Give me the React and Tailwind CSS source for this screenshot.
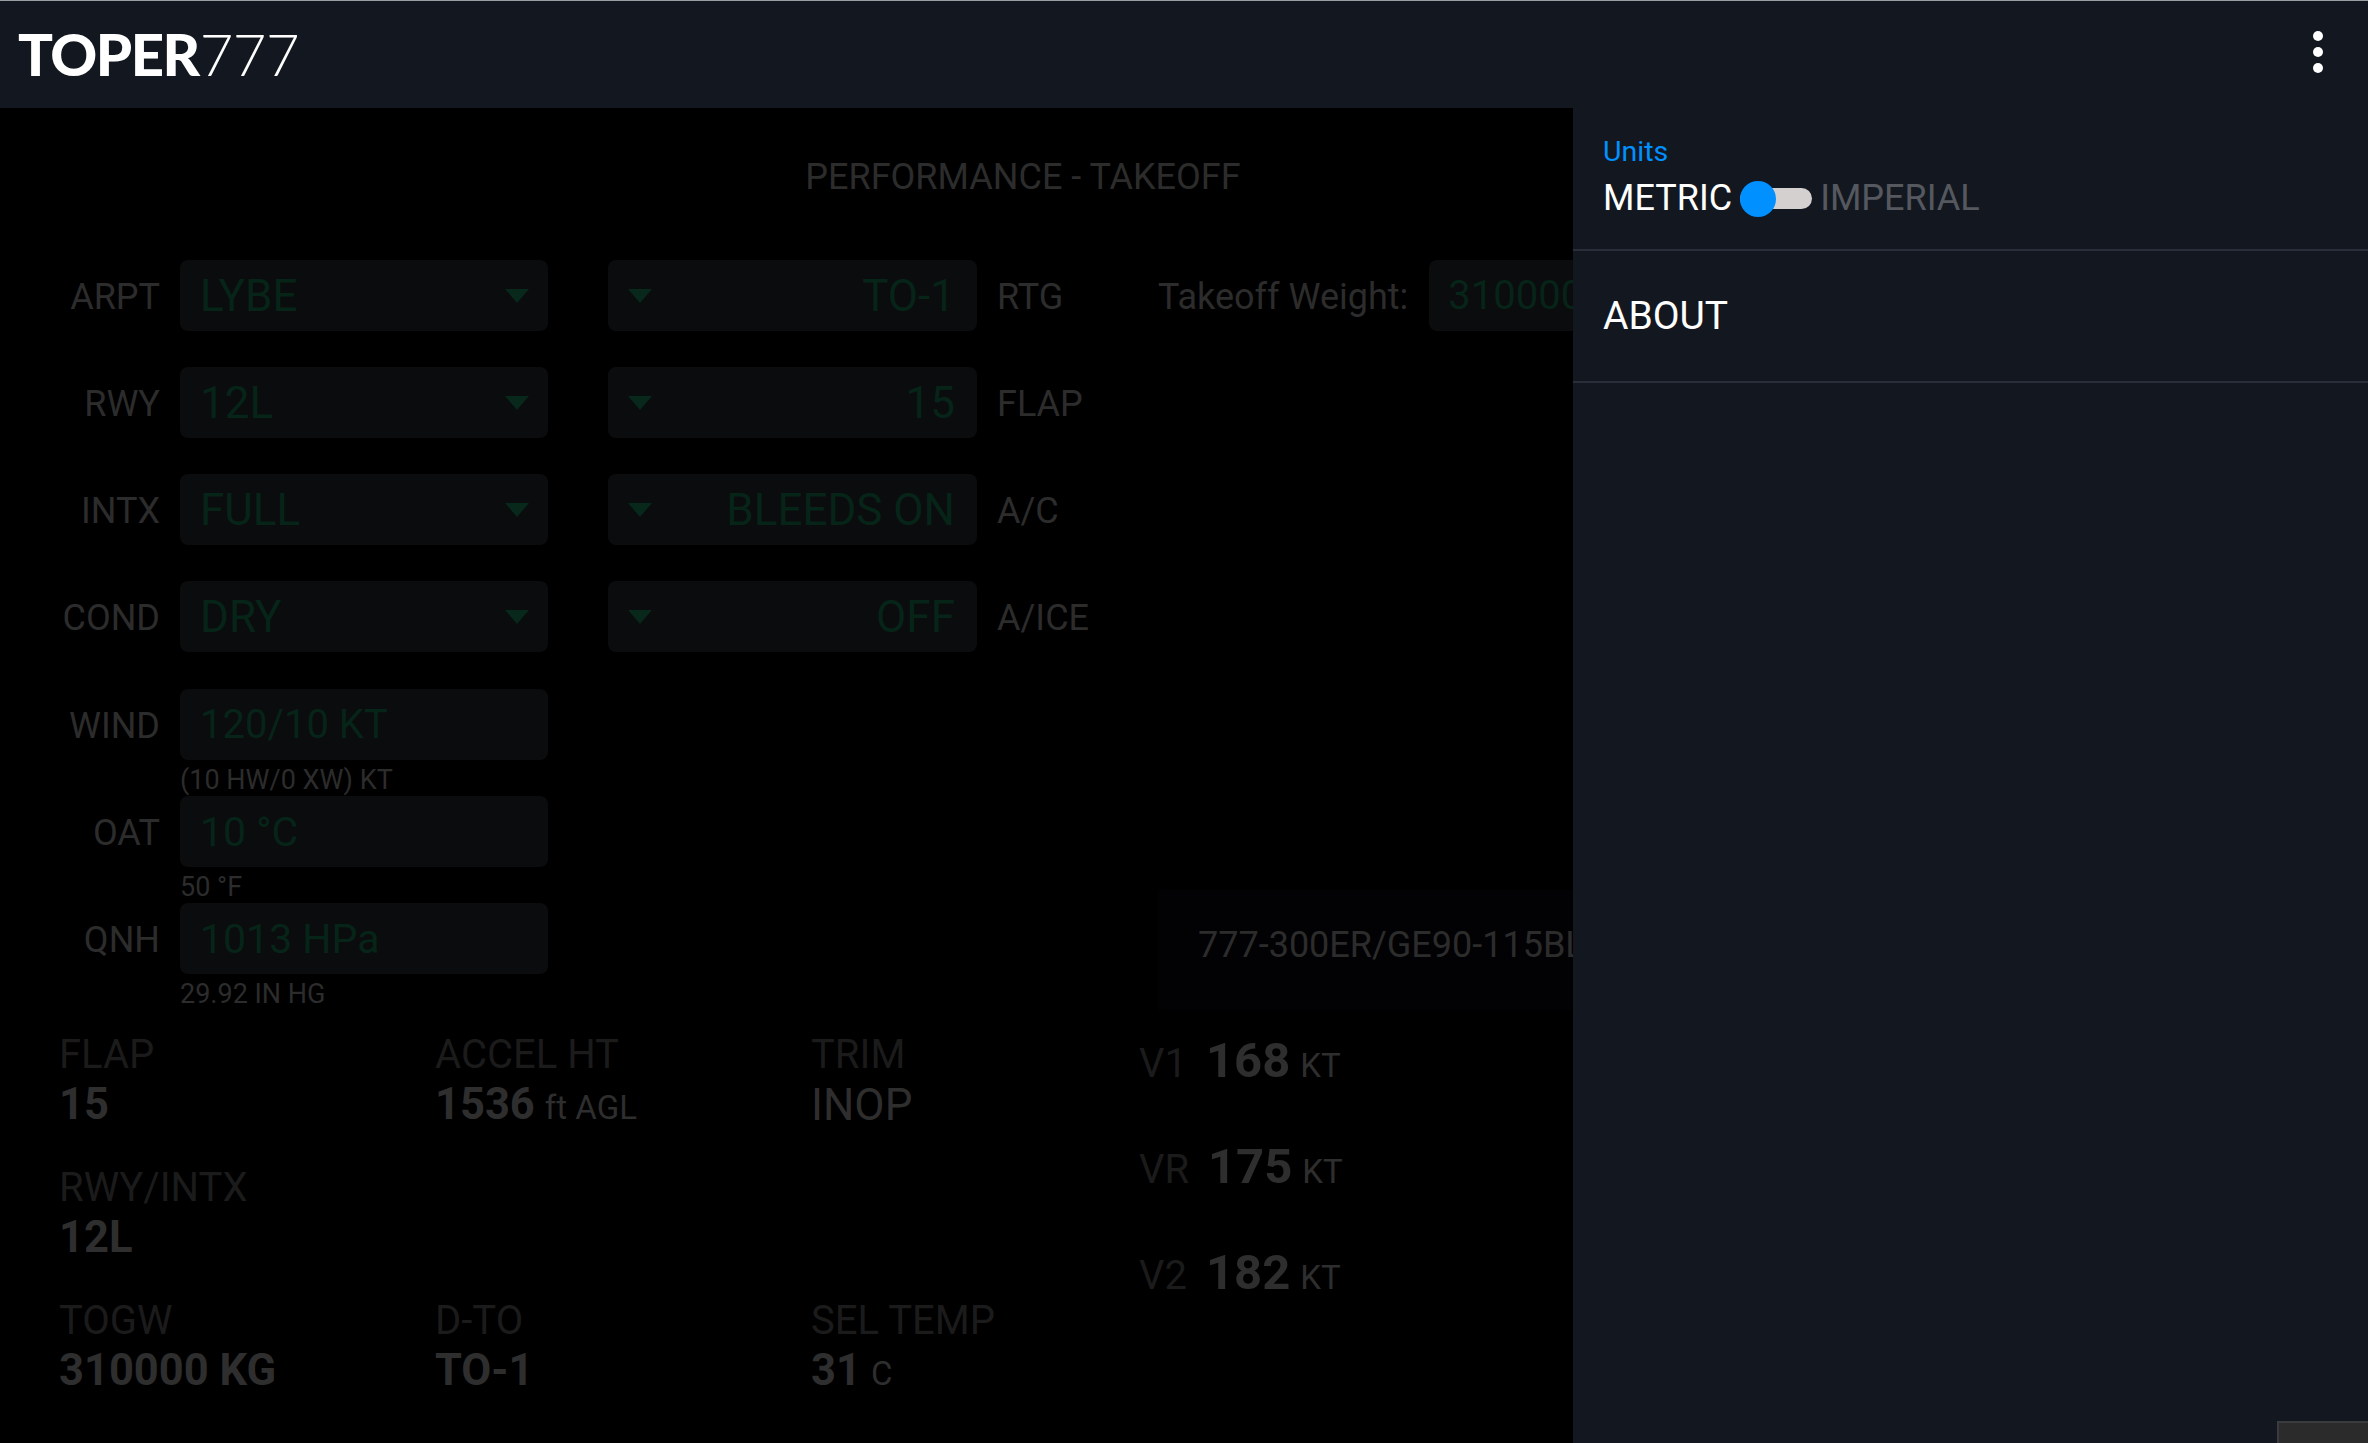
import React from "react";

function Arrow({ className }) {
  return (
    <svg width="24" height="14" viewBox="0 0 24 14" className={className}>
      <polygon points="0,0 24,0 12,14" fill="#07281b" />
    </svg>
  );
}

function Label({ children, className = "" }) {
  return <span className={"text-[36px] leading-[42px] text-[#2c2c2c] " + className}>{children}</span>;
}

function Field({ value, select, right, size = "text-[44px]" }) {
  return (
    <div
      className={
        "h-[71px] shrink-0 rounded-[8px] bg-[#0b0c0e] flex items-center leading-[52px] text-[#062418] " +
        size +
        " " +
        (right ? "w-[369px] justify-between pl-[20px] pr-[22px]" : "w-[368px] justify-between pl-[20px] pr-[19px]")
      }
    >
      {right && <Arrow />}
      <span>{value}</span>
      {select && !right && <Arrow />}
    </div>
  );
}

function LeftRow({ label, value, select, sub, size, className = "" }) {
  return (
    <div className={"h-[107px] flex items-start " + className}>
      <div className="w-[160px] h-[71px] pt-[2px] flex items-center justify-end shrink-0">
        <Label>{label}</Label>
      </div>
      <div className="ml-[20px]">
        <Field value={value} select={select} size={size} />
        {sub && <div className="mt-[2px] text-[27px] leading-[36px] text-[#2c2c2c]">{sub}</div>}
      </div>
    </div>
  );
}

function MidRow({ label, value }) {
  return (
    <div className="h-[107px] flex items-start">
      <Field value={value} select right />
      <div className="ml-[20px] h-[71px] pt-[2px] flex items-center">
        <Label>{label}</Label>
      </div>
    </div>
  );
}

function Stat({ label, value, unit }) {
  return (
    <div className="h-[133px]">
      <div className="text-[40px] leading-[47px] text-[#1b1b1b]">{label}</div>
      {value && (
        <div className="text-[43.5px] leading-[54px] font-bold text-[#2e2e2e]">
          {value}
          {unit && <span className="ml-[10px] text-[33px] font-normal">{unit}</span>}
        </div>
      )}
    </div>
  );
}

function Speed({ label, value, className = "" }) {
  return (
    <div className="h-[106px] flex items-baseline">
      <span className="w-[67px] text-[40px] leading-[60px] text-[#1b1b1b]">{label}</span>
      <span className={"text-[49px] leading-[60px] font-bold text-[#2e2e2e] " + className}>{value}</span>
      <span className="ml-[10px] text-[33px] text-[#2e2e2e]">KT</span>
    </div>
  );
}

export default function App() {
  return (
    <div className="relative h-[1443px] w-full overflow-hidden bg-black font-['Roboto',sans-serif]">
      <header className="h-[108px] border-t border-t-[#9a9da2] bg-[#131820] flex items-center justify-between pl-[18px] pr-[45px]">
        <div className="flex items-baseline text-[58px] leading-[68px] text-white font-['Lato',sans-serif] mt-[-2px]">
          <span className="font-black tracking-[-1.5px]">TOPER</span>
          <span className="font-light ml-[1px] tracking-[-0.5px]">777</span>
        </div>
        <div className="flex flex-col gap-[6px] mt-[-5px]">
          <div className="h-[10px] w-[10px] rounded-full bg-white" />
          <div className="h-[10px] w-[10px] rounded-full bg-white" />
          <div className="h-[10px] w-[10px] rounded-full bg-white" />
        </div>
      </header>

      <main>
        <h1 className="w-[2046px] pt-[48px] text-center text-[36px] leading-[42px] text-[#2c2c2c]">
          PERFORMANCE - TAKEOFF
        </h1>
        <div className="mt-[62px] flex h-[750px]">
          <div className="w-[548px] shrink-0">
            <LeftRow label="ARPT" value="LYBE" select />
            <LeftRow label="RWY" value="12L" select />
            <LeftRow label="INTX" value="FULL" select />
            <LeftRow label="COND" value="DRY" select className="mb-[1px]" />
            <LeftRow label="WIND" value="120/10 KT" size="text-[40px]" sub="(10 HW/0 XW) KT" />
            <LeftRow label="OAT" value="10 °C" size="text-[41px]" sub="50 °F" />
            <LeftRow label="QNH" value="1013 HPa" size="text-[41px]" sub="29.92 IN HG" />
          </div>
          <div className="ml-[60px] w-[550px] shrink-0">
            <MidRow label="RTG" value="TO-1" />
            <MidRow label="FLAP" value="15" />
            <MidRow label="A/C" value="BLEEDS ON" />
            <MidRow label="A/ICE" value="OFF" />
          </div>
          <div className="flex flex-col justify-between">
            <div className="flex h-[71px] items-center">
              <Label className="pt-[2px]">Takeoff Weight:</Label>
              <div className="ml-[21px] h-[71px] w-[368px] rounded-[8px] bg-[#0b0c0e] pl-[19px] text-[40px] leading-[71px] text-[#062418]">
                310000
              </div>
            </div>
            <div className="h-[120px] w-[600px] bg-[#020204] pl-[40px] pt-[34px] text-[36px] leading-[42px] text-[#2c2c2c] whitespace-nowrap">
              777-300ER/GE90-115BL
            </div>
          </div>
        </div>

        <div className="mt-[21px] flex">
          <div className="ml-[59px] grid w-[1080px] shrink-0 grid-cols-[376px_376px_328px]">
            <Stat label="FLAP" value="15" />
            <Stat label="ACCEL HT" value="1536" unit="ft AGL" />
            <div className="h-[133px]">
              <div className="text-[40px] leading-[47px] text-[#1b1b1b]">TRIM</div>
              <div className="text-[44px] leading-[54px] text-[#2e2e2e]">INOP</div>
            </div>
            <Stat label="RWY/INTX" value="12L" />
            <div />
            <div />
            <Stat label="TOGW" value="310000 KG" />
            <Stat label="D-TO" value="TO-1" />
            <Stat label="SEL TEMP" value="31" unit="C" />
          </div>
          <div>
            <Speed label="V1" value="168" />
            <Speed label="VR" value="175" className="ml-[2px]" />
            <Speed label="V2" value="182" />
          </div>
        </div>
      </main>

      <aside className="absolute bottom-0 right-0 top-[108px] w-[795px] bg-[#131820]">
        <div className="h-[143px] border-b-2 border-b-[#2a2e3a] pl-[30px] pt-[27px]">
          <div className="text-[28.5px] leading-[33px] text-[#0090ff]">Units</div>
          <div className="mt-[9px] flex items-center text-[36px] leading-[42px]">
            <span className="text-white">METRIC</span>
            <div className="relative ml-[8px] h-[21px] w-[72px] rounded-full bg-[#d5d0d0]">
              <div className="absolute left-0 top-[-7px] h-[36px] w-[36px] rounded-full bg-[#0090ff]" />
            </div>
            <span className="ml-[8px] text-[#55585e]">IMPERIAL</span>
          </div>
        </div>
        <div className="flex h-[132px] items-center border-b-2 border-b-[#2a2e3a] pl-[30px] text-[39px] leading-[46px] text-white">
          ABOUT
        </div>
      </aside>

      <div className="absolute bottom-0 right-0 h-[22px] w-[91px] border-l-2 border-t-2 border-[#3a3b3d] bg-[#2b2b2b]" />
    </div>
  );
}
